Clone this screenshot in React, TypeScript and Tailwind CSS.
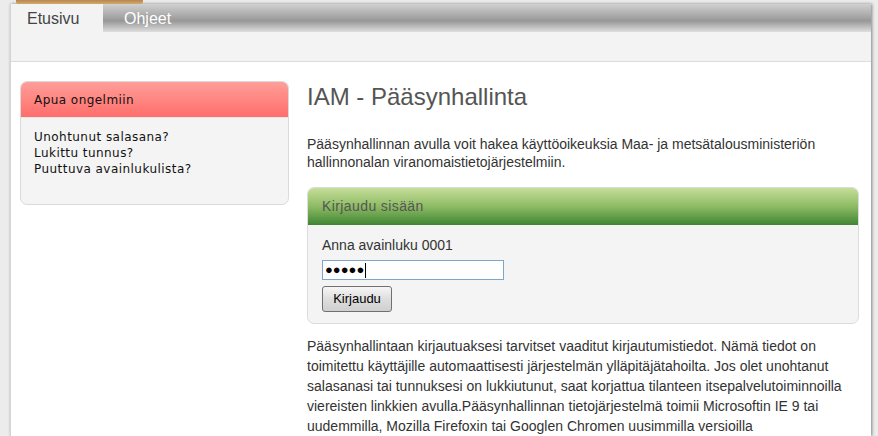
export default function App() {
  return (
    <div className="min-h-screen bg-[#ececec] font-['Liberation_Sans',Arial,sans-serif] overflow-hidden">
      {/* top strip */}
      <div className="h-[4px] flex">
        <div className="ml-[16px] w-[127px] h-[4px] rounded-b-[2px] bg-[linear-gradient(to_bottom,#b8874c,#d3a86f)]" />
      </div>

      <div className="ml-[10px] mr-[7px] h-[432px] bg-white shadow-[1px_0_3px_rgba(0,0,0,0.45)] border-l border-[#d4d4d4]">
        {/* nav */}
        <div className="h-[28px] flex bg-[linear-gradient(to_bottom,#d0d0d0_0%,#b0b0b0_35%,#979797_60%,#c4c4c4_85%,#dedede_100%)]">
          <div className="w-[92px] bg-[#f2f3f2] text-[16px] text-[#444] flex items-center pl-[16px] pt-[1px]">Etusivu</div>
          <div className="text-[16px] text-white flex items-center pl-[21px] pt-[1px]">Ohjeet</div>
        </div>
        <div className="h-[30px] bg-[#f2f3f2] border-b border-[#dcdcdc]" />

        <div className="flex pl-[9px] pr-[12px] pt-[19px]">
          {/* sidebar */}
          <div className="w-[269px] shrink-0">
            <div className="rounded-[7px] border border-[#dadada] bg-[#f4f4f4] overflow-hidden h-[124px] font-['DejaVu_Sans',Verdana,sans-serif]">
              <div className="h-[36px] bg-[linear-gradient(to_bottom,#ff9e99,#ff6e6b)] border-b border-[#e9e9e9] text-[12px] text-[#111] flex items-center pl-[13px] tracking-[0.45px]">
                Apua ongelmiin
              </div>
              <div className="pl-[13px] pt-[11px] text-[12px] leading-[16px] text-[#111] tracking-[0.45px]">
                <div>Unohtunut salasana?</div>
                <div>Lukittu tunnus?</div>
                <div>Puuttuva avainlukulista?</div>
              </div>
            </div>
          </div>

          {/* main */}
          <div className="ml-[18px] flex-1 text-[14px] text-[#333]">
            <h1 className="text-[24px] text-[#555] leading-[32px] mt-[0px]">IAM - Pääsynhallinta</h1>
            <p className="mt-[22px] leading-[18px]">
              Pääsynhallinnan avulla voit hakea käyttöoikeuksia Maa- ja metsätalousministeriön hallinnonalan viranomaistietojärjestelmiin.
            </p>

            <div className="mt-[16px] rounded-[7px] border border-[#dcdcdc] bg-[#f4f4f4] overflow-hidden h-[137px]">
              <div className="h-[37px] bg-[linear-gradient(to_bottom,#c6dd99,#8dbb64_50%,#3f8533)] text-[14px] text-[#555] flex items-center pl-[14px] tracking-[0.4px]">
                Kirjaudu sisään
              </div>
              <div className="pl-[14px] pt-[11px]">
                <div className="leading-[18px]">Anna avainluku 0001</div>
                <div className="mt-[6px] w-[182px] h-[20px] border border-[#7ea6cd] bg-white flex items-center pl-[2px] text-[13px] text-black">
                  ●●●●●<span className="inline-block w-px h-[15px] bg-black ml-[1px]" />
                </div>
                <button className="mt-[6px] w-[70px] h-[26px] border border-[#707070] rounded-[3px] bg-[linear-gradient(to_bottom,#f6f6f6,#dedede_50%,#cfcfcf)] text-[13px] text-black">
                  Kirjaudu
                </button>
              </div>
            </div>

            <p className="mt-[12px] leading-[20px] pr-[10px]">
              Pääsynhallintaan kirjautuaksesi tarvitset vaaditut kirjautumistiedot. Nämä tiedot on toimitettu käyttäjille automaattisesti järjestelmän ylläpitäjätahoilta. Jos olet unohtanut salasanasi tai tunnuksesi on lukkiutunut, saat korjattua tilanteen itsepalvelutoiminnoilla viereisten linkkien avulla.Pääsynhallinnan tietojärjestelmä toimii Microsoftin IE 9 tai uudemmilla, Mozilla Firefoxin tai Googlen Chromen uusimmilla versioilla
            </p>
          </div>
        </div>
      </div>
    </div>
  )
}
